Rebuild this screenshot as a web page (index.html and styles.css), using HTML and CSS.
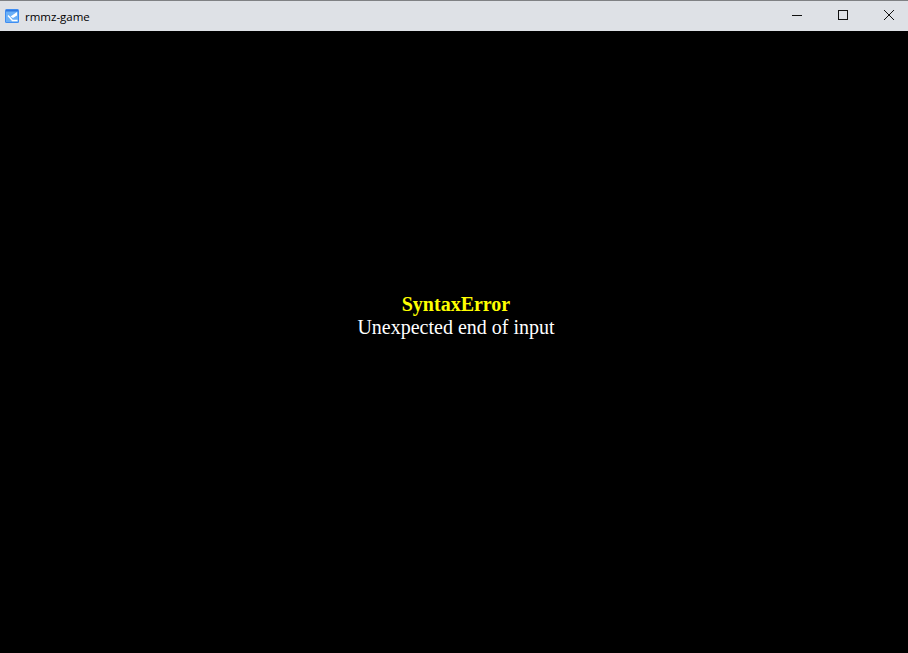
FILE: index.html
```html
<!DOCTYPE html>
<html lang="en">
<head>
  <meta charset="utf-8">
  <meta name="viewport" content="width=device-width, initial-scale=1.0">
  <title>rmmz-game</title>
  <link rel="stylesheet" href="styles.css">
</head>
<body>
  <div class="titlebar">
    <div class="app-title">
      <svg class="app-icon" width="14" height="14" viewBox="0 0 14 14">
        <rect x="0" y="0" width="14" height="14" rx="1.5" fill="#3f8df2"/>
        <rect x="1" y="1" width="12" height="12" fill="#6bb0f7"/>
        <path d="M12 3 L5.5 7.5 L8 9 L12 6.5 Z" fill="#fff"/>
        <path d="M3 6.5 L7.5 11.5 H12.5" fill="none" stroke="#fff" stroke-width="1.4"/>
        <path d="M1 1 H13 V2.5 H1 Z" fill="#2f78e0"/>
      </svg>
      <span>rmmz-game</span>
    </div>
    <div class="window-buttons">
      <div class="win-btn">
        <svg width="12" height="12" viewBox="0 0 12 12"><path d="M1 5.5 H11" stroke="#111" fill="none"/></svg>
      </div>
      <div class="win-btn">
        <svg width="12" height="12" viewBox="0 0 12 12"><rect x="1.5" y="0.5" width="9" height="9" stroke="#111" fill="none"/></svg>
      </div>
      <div class="win-btn">
        <svg width="12" height="12" viewBox="0 0 12 12"><path d="M1 0 L11 10 M11 0 L1 10" stroke="#111" fill="none"/></svg>
      </div>
    </div>
  </div>

  <div class="game-screen">
    <div class="error-printer">
      <div class="error-name">SyntaxError</div>
      <div class="error-message">Unexpected end of input</div>
    </div>
  </div>
</body>
</html>
```

FILE: styles.css
```css
* {
  box-sizing: border-box;
  margin: 0;
  padding: 0;
}

html, body {
  width: 100%;
  height: 100%;
  overflow: hidden;
}

body {
  display: flex;
  flex-direction: column;
  background: #000;
}

.titlebar {
  height: 31px;
  flex: none;
  display: flex;
  justify-content: space-between;
  align-items: center;
  background: #dee1e6;
  border-top: 1px solid #7f8184;
}

.app-title {
  display: flex;
  align-items: center;
  gap: 6px;
  padding-left: 5px;
  font-family: "Open Sans", sans-serif;
  font-size: 11.5px;
  color: #000;
}

.app-icon {
  display: block;
}

.window-buttons {
  display: flex;
  margin-right: -4px;
}

.win-btn {
  width: 46px;
  height: 30px;
  display: flex;
  justify-content: center;
  align-items: center;
}

.game-screen {
  flex: 1;
  padding-top: 262px;
  padding-left: 4px;
  background: #000;
  text-align: center;
  font-family: "Liberation Serif", serif;
  font-size: 20px;
  line-height: 23px;
}

.error-name {
  color: #ff0;
  font-weight: bold;
}

.error-message {
  color: #fff;
}
```
